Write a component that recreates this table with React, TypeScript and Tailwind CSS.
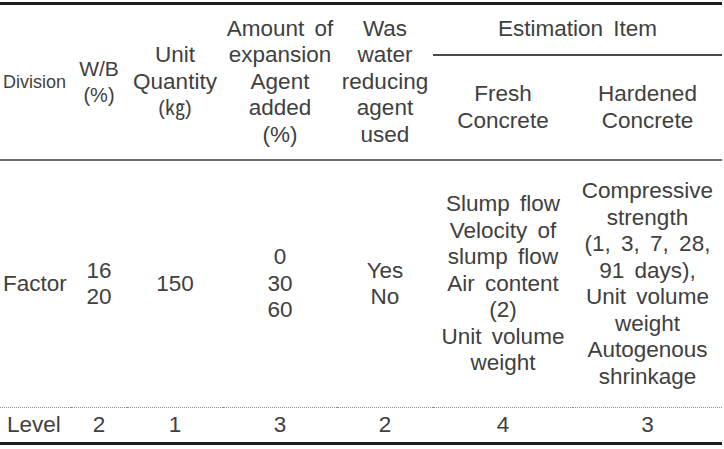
const head = 'font-normal align-middle text-center border-t-[3px] border-t-[#1c1c1c] p-0';
const span2 = head + ' border-b-2 border-b-[#6e6e6e]';
const body = 'align-middle text-center p-0 h-[247px] border-b border-dotted border-b-[#8a8a8a]';
const level = 'align-middle text-center p-0 h-[37px] border-b-[3px] border-b-[#1c1c1c]';

export default function App() {
  return (
    <div className="w-[724px] h-[449px] bg-white pt-[2px] font-['Liberation_Sans','Noto_Sans_CJK_KR',sans-serif]">
      <table className="w-[722px] table-fixed border-separate border-spacing-0 text-[#404040] text-[22.5px] leading-[26.5px] [word-spacing:4px]">
        <colgroup>
          <col className="w-[71px]" />
          <col className="w-[56px]" />
          <col className="w-[96px]" />
          <col className="w-[114px]" />
          <col className="w-[96px]" />
          <col className="w-[140px]" />
          <col className="w-[149px]" />
        </colgroup>
        <thead>
          <tr>
            <th rowSpan={2} className={span2 + ' text-[18px] text-left pl-[3px]'}>
              Division
            </th>
            <th rowSpan={2} className={span2 + ' text-[21px]'}>
              W/B
              <br />
              <span className="text-[20px]">(%)</span>
            </th>
            <th rowSpan={2} className={span2}>
              Unit
              <br />
              Quantity
              <br />
              <span className="text-[20px]">(㎏)</span>
            </th>
            <th rowSpan={2} className={span2}>
              Amount of
              <br />
              expansion
              <br />
              Agent
              <br />
              added
              <br />
              (%)
            </th>
            <th rowSpan={2} className={span2}>
              Was
              <br />
              water
              <br />
              reducing
              <br />
              agent
              <br />
              used
            </th>
            <th colSpan={2} className={head + ' h-[54px] border-b-2 border-b-[#4a4a4a]'}>
              Estimation Item
            </th>
          </tr>
          <tr>
            <th className="font-normal align-middle text-center p-0 h-[105px] border-b-2 border-b-[#6e6e6e]">
              Fresh
              <br />
              Concrete
            </th>
            <th className="font-normal align-middle text-center p-0 h-[105px] border-b-2 border-b-[#6e6e6e]">
              Hardened
              <br />
              Concrete
            </th>
          </tr>
        </thead>
        <tbody>
          <tr>
            <td className={body + ' text-left pl-[3px]'}>Factor</td>
            <td className={body}>
              16
              <br />
              20
            </td>
            <td className={body}>150</td>
            <td className={body}>
              0
              <br />
              30
              <br />
              60
            </td>
            <td className={body}>
              Yes
              <br />
              No
            </td>
            <td className={body}>
              Slump flow
              <br />
              Velocity of
              <br />
              slump flow
              <br />
              Air content
              <br />
              (2)
              <br />
              Unit volume
              <br />
              weight
            </td>
            <td className={body}>
              Compressive
              <br />
              strength
              <br />
              (1, 3, 7, 28,
              <br />
              91 days),
              <br />
              Unit volume
              <br />
              weight
              <br />
              Autogenous
              <br />
              shrinkage
            </td>
          </tr>
          <tr>
            <td className={level + ' text-left pl-[7px]'}>Level</td>
            <td className={level}>2</td>
            <td className={level}>1</td>
            <td className={level}>3</td>
            <td className={level}>2</td>
            <td className={level}>4</td>
            <td className={level}>3</td>
          </tr>
        </tbody>
      </table>
    </div>
  );
}
